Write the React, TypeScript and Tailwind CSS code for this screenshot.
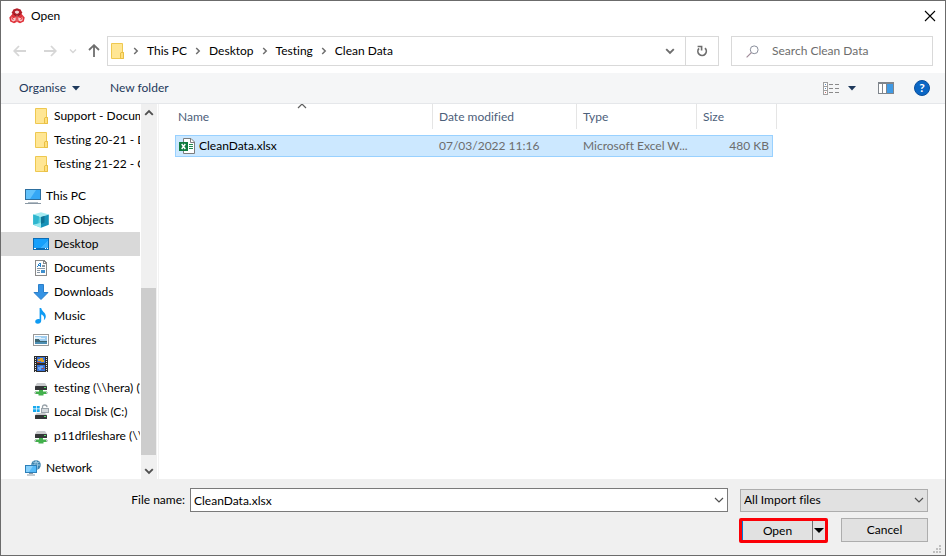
import React, { useState } from 'react';

type IconProps = { className?: string };

const AppIcon: React.FC = () => (
  <svg width="16" height="16" viewBox="0 0 16 16" aria-hidden="true">
    <path d="M8 0.2 11.6 1.6 13.2 4.6 11.8 7.4H4.2L2.8 4.6 4.4 1.6Z" fill="#b3202a" />
    <path d="M3.8 5.6 7.8 8.4V14L5 15.2 1.2 13.6 0.3 9.4Z" fill="#e0323a" />
    <path d="M12.2 5.6 8.2 8.4V14L11 15.2 14.8 13.6 15.7 9.4Z" fill="#e0323a" />
    <path d="M8 2.4 10.2 3.4 9.8 5 8 6 6.2 5 5.8 3.4Z" fill="#f3d5d7" />
    <path d="M4.6 6.2 8 8.2 11.4 6.2" stroke="#7d1219" fill="none" />
    <path d="M2.2 8.6 4.2 10.2 6.8 9.2 6.6 12.4 4.2 13.6 2.4 12.2Z" fill="#f8c9cb" />
    <path d="M13.8 8.6 11.8 10.2 9.2 9.2 9.4 12.4 11.8 13.6 13.6 12.2Z" fill="#f8c9cb" />
    <path d="M2.6 9.4 4.4 12M13.4 9.4 11.6 12" stroke="#e0323a" />
  </svg>
);

const FolderIcon: React.FC<IconProps> = ({ className }) => (
  <svg width="16" height="16" viewBox="0 0 16 16" className={className} aria-hidden="true">
    <path d="M2.5 0.5H13.5V9.5H14.5V15.5H2.5Z" fill="#ffe48f" stroke="#eec850" />
    <path d="M3 1H13V9H12V15H3Z" fill="#ffe694" />
    <path d="M11.5 15.5V10L12 9.5H14.5V15.5Z" fill="#ffe07c" stroke="#e9bf45" />
  </svg>
);

const ComputerIcon: React.FC = () => (
  <svg width="16" height="16" viewBox="0 0 16 16" aria-hidden="true">
    <rect x="0.5" y="1.5" width="15" height="10" fill="#35a7f5" stroke="#2d6f9f" />
    <path d="M1 2H11L5 11H1Z" fill="#62c2fb" />
    <path d="M3 14.5H13" stroke="#b4bec6" />
    <path d="M0 15.5H16" stroke="#8a98a4" />
  </svg>
);

const ObjectsIcon: React.FC = () => (
  <svg width="16" height="16" viewBox="0 0 16 16" aria-hidden="true">
    <path d="M8 0.3 15.8 2.6 8 5 0.2 2.6Z" fill="#a6ecf2" />
    <path d="M0.2 2.6 8 5V15.8L0.2 12.8Z" fill="#5ccfdd" />
    <path d="M15.8 2.6 8 5V15.8L15.8 12.8Z" fill="#1692b8" />
    <path d="M0.2 2.6 6 4.4 5.4 11.6 0.2 12.8Z" fill="#2fb6cf" />
    <path d="M5.4 11.6 8 10.6V15.8L0.2 12.8Z" fill="#9be8ef" />
    <path d="M8 5 11.5 4V10.5L8 12Z" fill="#0f7396" />
  </svg>
);

const DesktopIcon: React.FC = () => (
  <svg width="16" height="16" viewBox="0 0 16 16" shapeRendering="crispEdges" aria-hidden="true">
    <rect y="2" width="16" height="12" fill="#0b6cb5" />
    <rect x="1" y="3" width="14" height="9" fill="#17a0fb" />
    <path d="M15 4V12H7Z" fill="#3cb2ff" />
    <path d="M1 12.5H3M12 12.5H13M14 12.5H15" stroke="#fff" />
  </svg>
);

const DocumentIcon: React.FC = () => (
  <svg width="16" height="16" viewBox="0 0 16 16" shapeRendering="crispEdges" aria-hidden="true">
    <path d="M2.5 0.5H11L13.5 3V15.5H2.5Z" fill="#fdfdfd" stroke="#8a8a8a" />
    <path d="M10.5 1V3.5H13" stroke="#8a8a8a" fill="none" />
    <path d="M4 6.5H5M5 5.5H6M6 3.5H8M5 4.5H6M6 5.5H8M7.5 4V7" stroke="#2183d0" />
    <path d="M9 5.5H12M9 6.5H12M4 8.5H12M4 10.5H7M4 12.5H7" stroke="#8797a5" />
    <rect x="8" y="10" width="4" height="3" fill="#3d8fce" />
  </svg>
);

const DownloadIcon: React.FC = () => (
  <svg width="16" height="16" viewBox="0 0 16 16" aria-hidden="true">
    <path d="M5.5 0.5H10.5V8.5H15L8 15.5 1 8.5H5.5Z" fill="#3593e4" stroke="#2b7fca" />
  </svg>
);

const MusicIcon: React.FC = () => (
  <svg width="16" height="16" viewBox="0 0 16 16" aria-hidden="true">
    <path d="M6.6 0H8.2C8.4 3.2 12.8 4.6 12.8 8.2 12.8 9.8 12 11.2 10.8 12.2 11.6 9.6 11 7.2 8.2 6.4V12.8C8.2 14.6 6.6 15.8 4.8 15.8 3.2 15.8 2.2 15 2.2 13.6 2.2 11.8 4.2 10.6 6.6 11.2Z" fill="#0f9bf3" />
  </svg>
);

const PicturesIcon: React.FC = () => (
  <svg width="16" height="16" viewBox="0 0 16 16" shapeRendering="crispEdges" aria-hidden="true">
    <rect x="0.5" y="2.5" width="15" height="11" fill="#fff" stroke="#999" />
    <rect x="2" y="4" width="12" height="8" fill="#9fcdf0" />
    <path d="M2 5H8V6H12V7H2Z" fill="#dceefa" />
    <path d="M2 7H5L8 9H14V10H2Z" fill="#3c6673" />
    <path d="M2 10H14V12H2Z" fill="#4d8fb4" />
  </svg>
);

const VideosIcon: React.FC = () => (
  <svg width="16" height="16" viewBox="0 0 16 16" shapeRendering="crispEdges" aria-hidden="true">
    <rect x="1" width="14" height="16" fill="#2d2d2d" />
    <path d="M2.5 1V16M13.5 1V16" stroke="#e8e8e8" strokeDasharray="1 1" />
    <rect x="4" y="1" width="8" height="6" fill="#3973d8" />
    <rect x="4" y="9" width="8" height="6" fill="#3973d8" />
    <path d="M5 3H7V2H10V4H11V6H8V5H5Z" fill="#e0a52a" />
    <path d="M5 11H7V10H10V12H8V14H6V13H5Z" fill="#6fa6f0" />
    <path d="M9 12H11V13H9ZM4 6H7V7H4Z" fill="#b5472f" />
  </svg>
);

const NetDriveIcon: React.FC = () => (
  <svg width="16" height="16" viewBox="0 0 16 16" aria-hidden="true">
    <path d="M4 3H12L14 6H2Z" fill="#c9cbcd" />
    <rect x="2" y="6" width="12" height="4" rx="0.5" fill="#343638" />
    <rect x="11" y="7" width="2" height="1" fill="#56e36a" />
    <path d="M6 10H10V11.5H14V14H10.5V15.5H5.5V14H2V11.5H6Z" fill="#43b04d" />
    <path d="M1 12V13.5H3V12ZM13 12V13.5H15V12Z" fill="#c4c8ca" />
  </svg>
);

const LocalDiskIcon: React.FC = () => (
  <svg width="16" height="16" viewBox="0 0 16 16" aria-hidden="true">
    <path d="M0 2H3V4.5H0ZM3.7 2H6.7V4.5H3.7ZM0 5.2H3V8H0ZM3.7 5.2H6.7V8H3.7Z" fill="#17a9ee" />
    <path d="M9.5 5V3Q9.5 1 11.7 1 14 1 14 3.2" stroke="#9aa3aa" fill="none" strokeWidth="1.3" />
    <rect x="8.5" y="4.5" width="7" height="4" fill="#d5dade" stroke="#9aa3aa" />
    <path d="M4 9H12L14 11H2Z" fill="#c9cbcd" />
    <rect x="2" y="11" width="12" height="4" rx="0.5" fill="#343638" />
    <rect x="11" y="12" width="2" height="1" fill="#56e36a" />
  </svg>
);

const NetworkIcon: React.FC = () => (
  <svg width="16" height="16" viewBox="0 0 16 16" aria-hidden="true">
    <circle cx="11" cy="5" r="4.8" fill="#3e83ad" />
    <path d="M8 2Q11 3.5 14.5 2.2M6.5 5H15.5M11 0.5Q8.5 4 11 9M11 0.5Q14 4 12 9.5" stroke="#a9d3ea" fill="none" strokeWidth="0.8" />
    <rect x="0.5" y="5.5" width="11" height="7" fill="#55baf8" stroke="#2d7fb8" />
    <path d="M1 6H8L4 12H1Z" fill="#86d0fc" />
    <path d="M4 13.5H8M2 15H10" stroke="#8a98a4" />
  </svg>
);

const ExcelIcon: React.FC = () => (
  <svg width="16" height="16" viewBox="0 0 16 16" aria-hidden="true">
    <path d="M4.5 0.5H12L15.5 4V15.5H4.5Z" fill="#fff" stroke="#7c7c7c" />
    <path d="M11.5 0.5V4.5H15.5" fill="none" stroke="#7c7c7c" />
    <path d="M10 6.5H14M10 8.5H14M10 10.5H14" stroke="#1f8a50" />
    <rect y="4" width="9" height="9" fill="#107c41" />
    <path d="M2.7 6 6.3 11M6.3 6 2.7 11" stroke="#fff" strokeWidth="1.4" />
  </svg>
);

const Chevron: React.FC<IconProps> = ({ className }) => (
  <svg width="10" height="10" viewBox="0 0 10 10" className={className} aria-hidden="true">
    <path d="M1 3 5 7 9 3" stroke="currentColor" fill="none" strokeWidth="1.2" />
  </svg>
);

const BoldChevron: React.FC<IconProps> = ({ className }) => (
  <svg width="10" height="10" viewBox="0 0 10 10" className={className} aria-hidden="true">
    <path d="M1.2 3.2 5 7 8.8 3.2" stroke="currentColor" fill="none" strokeWidth="1.9" />
  </svg>
);

const Crumb: React.FC<IconProps> = ({ className }) => (
  <svg width="6" height="8" viewBox="0 0 6 8" className={className} aria-hidden="true">
    <path d="M1.2 1 4.2 4 1.2 7" stroke="#6e6e6e" fill="none" strokeWidth="1.5" />
  </svg>
);

const Triangle: React.FC<IconProps> = ({ className }) => (
  <svg width="8" height="5" viewBox="0 0 8 5" className={className} aria-hidden="true">
    <path d="M0 0H8L4 4.6Z" fill="currentColor" />
  </svg>
);

const Arrow: React.FC<IconProps> = ({ className }) => (
  <svg width="14" height="12" viewBox="0 0 14 12" className={className} aria-hidden="true">
    <path d="M6 1 1.2 6 6 11M1.2 6H13" stroke="currentColor" fill="none" strokeWidth="1.8" />
  </svg>
);

const crumbs = ['This PC', 'Desktop', 'Testing', 'Clean Data'];

const groups = [
  [
    { label: 'Support - Documents', icon: <FolderIcon />, nested: true },
    { label: 'Testing 20-21 - Documents', icon: <FolderIcon />, nested: true },
    { label: 'Testing 21-22 - General', icon: <FolderIcon />, nested: true },
  ],
  [
    { label: 'This PC', icon: <ComputerIcon />, nested: false },
    { label: '3D Objects', icon: <ObjectsIcon />, nested: true },
    { label: 'Desktop', icon: <DesktopIcon />, nested: true },
    { label: 'Documents', icon: <DocumentIcon />, nested: true },
    { label: 'Downloads', icon: <DownloadIcon />, nested: true },
    { label: 'Music', icon: <MusicIcon />, nested: true },
    { label: 'Pictures', icon: <PicturesIcon />, nested: true },
    { label: 'Videos', icon: <VideosIcon />, nested: true },
    { label: 'testing (\\\\hera) (T:)', icon: <NetDriveIcon />, nested: true },
    { label: 'Local Disk (C:)', icon: <LocalDiskIcon />, nested: true },
    { label: 'p11dfileshare (\\\\hera)', icon: <NetDriveIcon />, nested: true },
  ],
  [{ label: 'Network', icon: <NetworkIcon />, nested: false }],
];

const TitleBar: React.FC = () => (
  <header className="flex h-[29px] shrink-0 items-center pl-2 pr-[7px]">
    <AppIcon />
    <h1 className="ml-1.5 flex-1">Open</h1>
    <button aria-label="Close" className="p-0.5">
      <svg width="12" height="12" viewBox="0 0 12 12" aria-hidden="true">
        <path d="M1 1 11 11M11 1 1 11" stroke="#000" strokeWidth="1.1" />
      </svg>
    </button>
  </header>
);

const AddressRow: React.FC = () => (
  <div className="flex shrink-0 items-center px-3 pt-1.5 pb-[7px]">
    <button aria-label="Back" className="text-[#d6d6d6]"><Arrow /></button>
    <button aria-label="Forward" className="ml-4 text-[#d6d6d6]"><Arrow className="rotate-180" /></button>
    <button aria-label="Recent locations" className="ml-3 text-[#d6d6d6]">
      <svg width="8" height="8" viewBox="0 0 8 8" aria-hidden="true">
        <path d="M1 2.5 4 5.5 7 2.5" stroke="currentColor" fill="none" strokeWidth="1.4" />
      </svg>
    </button>
    <button aria-label="Up" className="ml-2.5 text-[#6e6e6e]"><Arrow className="rotate-90" /></button>
    <div className="ml-1.5 flex h-[30px] flex-1 border border-[#d9d9d9]">
      <nav aria-label="Location" className="flex flex-1 items-center pl-px">
        <FolderIcon />
        {crumbs.map((crumb) => (
          <React.Fragment key={crumb}>
            <Crumb className="mx-2" />
            <button className="whitespace-nowrap">{crumb}</button>
          </React.Fragment>
        ))}
      </nav>
      <button aria-label="Previous locations" className="w-[30px] text-[#6e6e6e]"><BoldChevron className="mx-auto" /></button>
      <button aria-label="Refresh" className="w-[33px] border-l border-[#d9d9d9] text-[#6e6e6e]">
        <svg width="12" height="12" viewBox="0 0 12 12" className="mx-auto" aria-hidden="true">
          <path d="M9 3.2A4.2 4.2 0 1 1 3 3.4" stroke="currentColor" fill="none" strokeWidth="1.7" />
          <path d="M1.6 1.5H5.6V5.4" stroke="currentColor" fill="none" strokeWidth="1.6" />
        </svg>
      </button>
    </div>
    <label className="ml-3 flex h-[30px] w-[202px] items-center border border-[#d9d9d9] pl-3.5">
      <svg width="13" height="13" viewBox="0 0 13 13" className="shrink-0" aria-hidden="true">
        <circle cx="8.2" cy="4.8" r="3.9" stroke="#8a8f9c" fill="none" />
        <path d="M5.4 7.6 0.6 12.4" stroke="#a08a98" strokeWidth="1.2" />
      </svg>
      <input type="text" aria-label="Search Clean Data" placeholder="Search Clean Data" className="ml-[13px] w-full min-w-0 outline-none placeholder:text-[#6d6d6d]" />
    </label>
  </div>
);

const Toolbar: React.FC = () => (
  <div className="flex h-[31px] shrink-0 items-center border-b border-[#e5e7ea] bg-[#f5f6f7] pl-[18px] pr-[15px] text-[#1e395b]">
    <button className="flex items-center">Organise<Triangle className="ml-1.5" /></button>
    <button className="ml-[30px]">New folder</button>
    <button aria-label="Change your view" className="ml-auto flex items-center">
      <svg width="17" height="13" viewBox="0 0 17 13" shapeRendering="crispEdges" aria-hidden="true">
        <path d="M0.5 0.5H4.5V12.5H0.5ZM0 4.5H5M0 8.5H5" stroke="#a0a0a0" fill="#fff" />
        <path d="M2 2.5H3M2 6.5H3" stroke="#5c87b8" />
        <path d="M2 10.5H3" stroke="#c66" />
        <path d="M6 2.5H10M12 2.5H16M6 6.5H10M12 6.5H16M6 10.5H10M12 10.5H16" stroke="#8a8a8a" />
      </svg>
      <Triangle className="ml-2" />
    </button>
    <button aria-label="Show the preview pane" className="ml-[22px]">
      <svg width="16" height="12" viewBox="0 0 16 12" shapeRendering="crispEdges" aria-hidden="true">
        <rect x="0.5" y="0.5" width="15" height="11" fill="#fff" stroke="#7f858c" />
        <path d="M0 1H16M4.5 1V12M8.5 1V12" stroke="#7f858c" />
        <rect x="9" y="2" width="6" height="9" fill="#3f9ae5" />
      </svg>
    </button>
    <button aria-label="Help" className="ml-5 flex h-4 w-4 items-center justify-center rounded-full border border-[#0a4f9c] bg-[#0a66c4] text-[12px] leading-none font-bold text-white">?</button>
  </div>
);

const Sidebar: React.FC = () => {
  const [current, setCurrent] = useState('Desktop');
  return (
    <aside className="flex w-[158px] shrink-0 border-r border-[#f2f2f2]">
      <div className="flex w-[139px] flex-col gap-2 overflow-hidden">
        {groups.map((group, i) => (
          <ul key={i}>
            {group.map((item) => (
              <li key={item.label}>
                <button
                  onClick={() => setCurrent(item.label)}
                  className={`flex h-6 w-full items-center gap-[5px] overflow-hidden whitespace-nowrap ${item.nested ? 'pl-8' : 'pl-6'} ${current === item.label ? 'bg-[#d9d9d9]' : ''}`}
                >
                  <span className="shrink-0">{item.icon}</span>
                  {item.label}
                </button>
              </li>
            ))}
          </ul>
        ))}
      </div>
      <div className="ml-px flex w-4 flex-col items-center bg-[#f0f0f0] text-[#505050]">
        <div className="flex h-[17px] items-center"><BoldChevron className="rotate-180" /></div>
        <div className="flex w-full flex-1 flex-col justify-end pr-px pb-[7px]">
          <div className="h-1/2 bg-[#cdcdcd]" />
        </div>
        <div className="flex h-[17px] items-center"><BoldChevron /></div>
      </div>
    </aside>
  );
};

const FileList: React.FC = () => (
  <main className="min-w-0 flex-1 overflow-hidden pl-4">
    <table className="w-[598px] table-fixed border-separate border-spacing-0 text-left">
      <thead className="text-[#4c607a]">
        <tr>
          <th className="w-[258px] p-0 pb-1.5 font-normal">
            <div className="relative flex h-[25px] items-center border-r border-[#e5e5e5] pl-[3px]">
              Name
              <Chevron className="absolute -top-[3px] left-[122px] rotate-180 text-[#606060]" />
            </div>
          </th>
          <th className="w-36 p-0 pb-1.5 font-normal">
            <div className="flex h-[25px] items-center border-r border-[#e5e5e5] pl-1.5">Date modified</div>
          </th>
          <th className="w-[120px] p-0 pb-1.5 font-normal">
            <div className="flex h-[25px] items-center border-r border-[#e5e5e5] pl-1.5">Type</div>
          </th>
          <th className="p-0 pb-1.5 font-normal">
            <div className="-mr-1 flex h-[25px] items-center border-r border-[#e5e5e5] pl-1.5">Size</div>
          </th>
        </tr>
      </thead>
      <tbody>
        <tr className="bg-[#cce8ff] text-[#6d6d6d]">
          <td className="h-[22px] border-y border-l border-[#99d1ff] p-0 pl-[3px] text-black">
            <span className="flex items-center gap-1"><ExcelIcon />CleanData.xlsx</span>
          </td>
          <td className="border-y border-[#99d1ff] p-0 pl-1.5">07/03/2022 11:16</td>
          <td className="border-y border-[#99d1ff] p-0 pl-1.5">Microsoft Excel W...</td>
          <td className="border-y border-r border-[#99d1ff] p-0 pr-[3px] text-right">480 KB</td>
        </tr>
      </tbody>
    </table>
  </main>
);

const Footer: React.FC = () => {
  const [name, setName] = useState('CleanData.xlsx');
  return (
    <footer className="relative shrink-0 bg-[#f0f0f0] pt-[9px] pr-[17px] pb-3">
      <div className="flex items-center">
        <label htmlFor="file-name" className="w-[184px] text-right">File name:</label>
        <div className="ml-[5px] flex h-6 flex-1 items-center border border-[#7a7a7a] bg-white pr-[3px]">
          <input id="file-name" type="text" value={name} onChange={(e) => setName(e.target.value)} className="h-full min-w-0 flex-1 pl-[3px] outline-none" />
          <button aria-label="Recent file names" className="text-[#505050]"><Chevron /></button>
        </div>
        <div className="relative ml-3 w-[188px]">
          <select aria-label="File type" className="block h-[23px] w-full appearance-none border border-[#adadad] bg-[#e1e1e1] pl-[3px]">
            <option>All Import files</option>
          </select>
          <Chevron className="pointer-events-none absolute top-1.5 right-1 text-[#505050]" />
        </div>
      </div>
      <div className="mt-1.5 flex justify-end gap-[13px]">
        <div className="flex h-[25px] w-[89px] rounded-xs border-3 border-[#fb0007] bg-[#e1e1e1]">
          <button className="flex-1 border-l border-[#0078d7]">Open</button>
          <button aria-label="More open options" className="w-[13px] border-l border-[#6e6e6e] text-black">
            <svg width="10" height="5" viewBox="0 0 10 5" className="mx-auto" aria-hidden="true">
              <path d="M0 0H10L5 5Z" fill="currentColor" />
            </svg>
          </button>
        </div>
        <button className="h-6 w-[87px] border border-[#adadad] bg-[#e1e1e1]">Cancel</button>
      </div>
      <svg width="8" height="8" viewBox="0 0 8 8" shapeRendering="crispEdges" className="absolute right-1 bottom-0.5" aria-hidden="true">
        <path d="M6 0H8V2H6ZM3 3H5V5H3ZM6 3H8V5H6ZM0 6H2V8H0ZM3 6H5V8H3ZM6 6H8V8H6Z" fill="#bfbfbf" />
      </svg>
    </footer>
  );
};

export default function App() {
  return (
    <div className="flex h-screen flex-col border border-[#6b6b6b] bg-white font-['Lato','Open_Sans',sans-serif] text-[12px] leading-4 text-black [font-variant-ligatures:none]">
      <TitleBar />
      <AddressRow />
      <Toolbar />
      <div className="flex min-h-0 flex-1">
        <Sidebar />
        <FileList />
      </div>
      <Footer />
    </div>
  );
}
